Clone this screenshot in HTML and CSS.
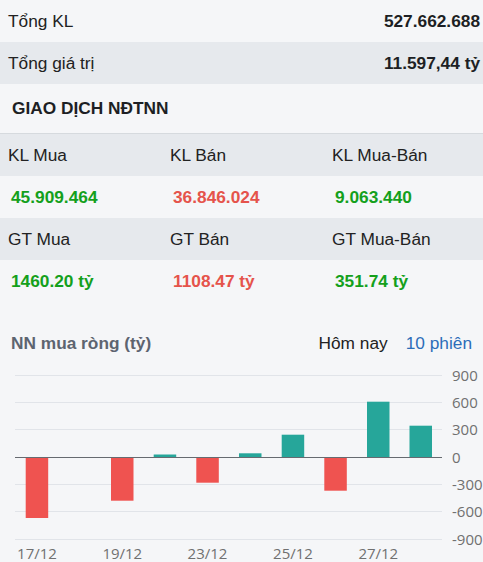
FILE: index.html
```html
<!DOCTYPE html>
<html lang="vi">
<head>
<meta charset="utf-8">
<title>Giao dịch NĐTNN</title>
<link rel="stylesheet" href="styles.css">
</head>
<body>
<div class="summary">
  <div class="sum-row"><span>Tổng KL</span><b>527.662.688</b></div>
  <div class="sum-row alt"><span>Tổng giá trị</span><b>11.597,44 tỷ</b></div>
</div>
<h2 class="section-title">GIAO DỊCH NĐTNN</h2>
<div class="grid">
  <div class="g-row head"><span>KL Mua</span><span>KL Bán</span><span>KL Mua-Bán</span></div>
  <div class="g-row vals"><span class="up">45.909.464</span><span class="down">36.846.024</span><span class="up">9.063.440</span></div>
  <div class="g-row head"><span>GT Mua</span><span>GT Bán</span><span>GT Mua-Bán</span></div>
  <div class="g-row vals"><span class="up">1460.20 tỷ</span><span class="down">1108.47 tỷ</span><span class="up">351.74 tỷ</span></div>
</div>
<div class="chart-head">
  <span class="chart-title">NN mua ròng (tỷ)</span>
  <div class="tabs"><span class="tab">Hôm nay</span><span class="tab active">10 phiên</span></div>
</div>
<svg class="chart" width="483" height="202" viewBox="0 0 483 202">
  <g class="grid-lines">
    <line x1="15" x2="442" y1="16.5" y2="16.5"/>
    <line x1="15" x2="442" y1="43.5" y2="43.5"/>
    <line x1="15" x2="442" y1="70.5" y2="70.5"/>
    <line x1="15" x2="442" y1="125.5" y2="125.5"/>
    <line x1="15" x2="442" y1="152.5" y2="152.5"/>
    <line x1="15" x2="442" y1="180.5" y2="180.5"/>
  </g>
  <g class="bars">
    <rect class="neg" x="25.7" y="98" width="22.5" height="61"/>
    <rect class="neg" x="68.3" y="98" width="22.5" height="1"/>
    <rect class="neg" x="111" y="98" width="22.5" height="43.7"/>
    <rect class="pos" x="153.7" y="95.5" width="22.5" height="2.5"/>
    <rect class="neg" x="196.3" y="98" width="22.5" height="25.7"/>
    <rect class="pos" x="239" y="94.3" width="22.5" height="3.7"/>
    <rect class="pos" x="281.7" y="75.7" width="22.5" height="22.3"/>
    <rect class="neg" x="324.3" y="98" width="22.5" height="33.7"/>
    <rect class="pos" x="367" y="42.7" width="22.5" height="55.3"/>
    <rect class="pos" x="409.5" y="66.7" width="22.5" height="31.3"/>
  </g>
  <line class="zero" x1="15" x2="442" y1="98.5" y2="98.5"/>
  <g class="y-labels">
    <text x="452" y="21.5">900</text>
    <text x="452" y="48.5">600</text>
    <text x="452" y="75.5">300</text>
    <text x="452" y="103.5">0</text>
    <text x="452" y="130.5">-300</text>
    <text x="452" y="157.5">-600</text>
    <text x="452" y="185.5">-900</text>
  </g>
  <g class="x-labels">
    <text x="37" y="200">17/12</text>
    <text x="122.3" y="200">19/12</text>
    <text x="207.5" y="200">23/12</text>
    <text x="293" y="200">25/12</text>
    <text x="378.3" y="200">27/12</text>
  </g>
</svg>
</body>
</html>
```
FILE: styles.css
```css
html, body {
  margin: 0;
  padding: 0;
  background: #f5f6f8;
  font-family: "Liberation Sans", Arial, sans-serif;
  color: #222;
  overflow: hidden;
}
.sum-row {
  display: flex;
  justify-content: space-between;
  align-items: center;
  height: 42px;
  padding: 0 3px 0 8px;
  font-size: 17.3px;
}
.sum-row b {
  font-weight: bold;
  color: #1d1f24;
}
.sum-row.alt {
  background: #e6e9ed;
}
.section-title {
  margin: 0;
  height: 49px;
  display: flex;
  align-items: center;
  padding: 0 0 0 12px;
  font-size: 17.3px;
  font-weight: bold;
  color: #1d1f24;
  border-bottom: 1px solid #d6dade;
}
.g-row {
  display: grid;
  grid-template-columns: 162px 162px 1fr;
  align-items: center;
  height: 42px;
  padding-left: 8px;
  font-size: 17.3px;
}
.g-row.head {
  background: #e6e9ed;
  color: #222;
}
.g-row.vals {
  padding-left: 11px;
  font-weight: bold;
}
.up { color: #14a01c; }
.down { color: #e5534b; }
.chart-head {
  display: flex;
  justify-content: space-between;
  align-items: center;
  height: 20px;
  padding: 31px 11px 6px 11px;
  font-size: 17.3px;
}
.chart-title {
  font-weight: bold;
  color: #5d6470;
}
.tabs {
  display: flex;
  gap: 18px;
}
.tab { color: #222; }
.tab.active { color: #2c6db8; }
.chart {
  display: block;
}
.grid-lines line {
  stroke: #e1e4e9;
  stroke-width: 1;
}
.zero {
  stroke: #666a70;
  stroke-width: 1;
}
.bars .neg { fill: #ef5350; }
.bars .pos { fill: #26a69a; }
.y-labels text, .x-labels text {
  font-family: "Open Sans", sans-serif;
  font-size: 15px;
  fill: #707070;
}
.x-labels text {
  text-anchor: middle;
}
```
